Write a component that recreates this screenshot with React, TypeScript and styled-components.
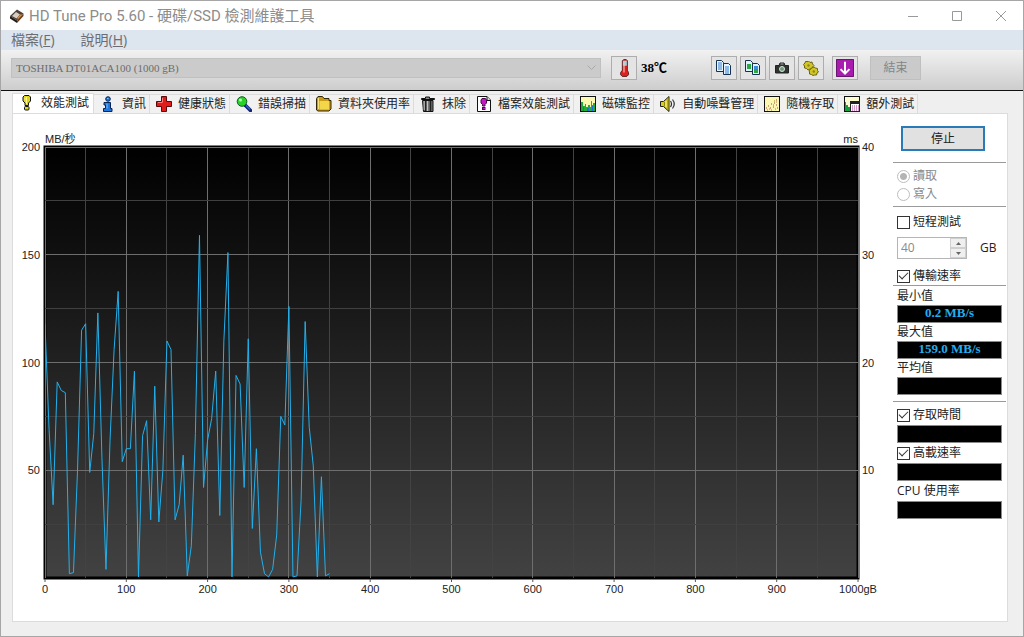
import React from "react";
import styled, { createGlobalStyle, css } from "styled-components";

const UI = `"Liberation Sans", "Noto Sans CJK TC", sans-serif`;
const CAPTION = `"Open Sans", "Noto Sans CJK TC", sans-serif`;
const TITLE = `Roboto, "Noto Sans CJK TC", sans-serif`;
const SERIF = `"Liberation Serif", "Noto Sans CJK TC", serif`;

const GlobalStyle = createGlobalStyle`
  *, *::before, *::after { box-sizing: border-box; }
  body { margin: 0; font: 12px/18px ${UI}; color: #222; background: #efefef; }
  button, input, select { font: inherit; color: inherit; margin: 0; }
`;

const Window = styled.div`
  display: flex;
  flex-direction: column;
  min-height: 100vh;
  border: 1px solid #a6a6a6;
  background: #efefef;
`;

const TitleBar = styled.header`
  display: flex;
  align-items: center;
  height: 29px;
  padding-left: 8px;
  background: #fff;
  color: #8c8c8c;
`;

const Title = styled.h1`
  flex: 1;
  margin: 0;
  padding-left: 4px;
  font: 400 15px/20px ${TITLE};
  white-space: nowrap;
`;

const CaptionButton = styled.button`
  display: grid;
  place-items: center;
  width: 44px;
  height: 29px;
  padding: 0;
  border: 0;
  background: none;
`;

const MenuBar = styled.nav`
  display: flex;
  gap: 26px;
  height: 20px;
  padding-left: 10px;
  background: #dde5ee;
`;

const MenuButton = styled.button`
  padding: 0;
  border: 0;
  background: none;
  color: #6a6e74;
  font: 14px/20px ${CAPTION};
`;

const Toolbar = styled.div`
  display: flex;
  align-items: center;
  height: 41px;
  padding: 0 102px 4px 10px;
  border-bottom: 1px solid #111;
  background: linear-gradient(#f1f1f1, #cdcdcd);
`;

const DriveBox = styled.div`
  display: grid;
  flex: 1;
  align-items: center;
  margin-right: 10px;
  & > * { grid-area: 1 / 1; }
  & > svg { justify-self: end; margin-right: 5px; pointer-events: none; }
`;

const DriveSelect = styled.select`
  appearance: none;
  width: 100%;
  height: 20px;
  padding: 0 4px;
  border: 1px solid #c0c0c0;
  border-radius: 0;
  background: #cbcbcb;
  color: #6d6d6d;
  font: 11px/18px ${SERIF};
  opacity: 1;
`;

const ToolButton = styled.button<{ $before?: number }>`
  display: grid;
  place-items: center;
  width: 26px;
  height: 24px;
  margin-left: ${(p) => p.$before ?? 0}px;
  padding: 0;
  border: 1px solid #adadad;
  background: #e4e4e4;
`;

const ToolGroup = styled.div`
  display: flex;
  gap: 3px;
`;

const Temperature = styled.span`
  width: 70px;
  padding-left: 4px;
  color: #000;
  font: 700 13px/18px ${SERIF};
`;

const ExitButton = styled.button`
  width: 51px;
  height: 24px;
  margin-left: 12px;
  padding: 0;
  border: 1px solid #bfbfbf;
  background: #cacaca;
  color: #858585;
`;

const TabList = styled.div`
  display: flex;
  padding: 2px 0 0 11px;
`;

const Tab = styled.button<{ $active?: boolean }>`
  display: flex;
  align-items: center;
  gap: 6px;
  height: 19px;
  margin-top: 1px;
  padding: 0 3px 0 6px;
  border: 1px solid #dcdcdc;
  border-left: 0;
  border-bottom: 0;
  background: #f1f1f1;
  color: #222;
  line-height: 18px;
  white-space: nowrap;
  ${(p) =>
    p.$active &&
    css`
      height: 21px;
      margin: 0 0 -1px;
      padding: 0 4px 2px 6px;
      border-left: 1px solid #dcdcdc;
      background: #fff;
    `}
`;

const Panel = styled.main`
  display: flex;
  flex: 1;
  margin: 0 15px 14px 11px;
  border: 1px solid #dcdcdc;
  background: #fff;
`;

const ChartArea = styled.section`
  flex: 1;
  display: flex;
  min-height: 400px;
  padding: 33px 35px 43px 32px;
`;

const ChartSvg = styled.svg`
  flex: 1;
  width: 0;
  height: auto;
  overflow: visible;
  text { font: 11px ${UI}; fill: #222; }
`;

const SidePanel = styled.aside`
  display: flex;
  flex-direction: column;
  width: 113px;
  margin-right: 1px;
`;

const StopButton = styled.button`
  width: 84px;
  height: 25px;
  margin: 12px 0 11px 8px;
  padding: 0;
  border: 2px solid #2a7ab8;
  background: #e1e1e1;
`;

const Group = styled.div<{ $top?: number; $bottom?: number }>`
  display: flex;
  flex-direction: column;
  padding: ${(p) => p.$top ?? 0}px 4px ${(p) => p.$bottom ?? 0}px;
  border-top: 1px solid #9a9a9a;
`;

const Option = styled.label<{ $off?: boolean; $height?: number }>`
  display: flex;
  align-items: center;
  gap: 3px;
  height: ${(p) => p.$height ?? 18}px;
  color: ${(p) => (p.$off ? "#8a8a8a" : "#222")};
`;

const Radio = styled.input`
  appearance: none;
  width: 13px;
  height: 13px;
  border: 1px solid #bdbdbd;
  border-radius: 50%;
  background: #fff;
  &:checked { background: radial-gradient(#b4b4b4 0 3px, #fff 4px); }
`;

const CheckBox = styled.input`
  appearance: none;
  display: grid;
  place-items: center;
  width: 13px;
  height: 13px;
  border: 1px solid #333;
  background: #fff;
  &:checked::after {
    content: "";
    width: 9px;
    height: 5px;
    margin-bottom: 3px;
    border: solid #333;
    border-width: 0 0 1px 1px;
    transform: rotate(-45deg);
  }
`;

const SizeRow = styled.div`
  display: flex;
  align-items: center;
  margin: 6px 0 8px;
`;

const Spinner = styled.div`
  display: flex;
  width: 70px;
  height: 22px;
  border: 1px solid #b5b5b5;
`;

const SpinInput = styled.input`
  flex: 1;
  width: 0;
  padding: 0 3px;
  border: 0;
  background: #fff;
  color: #8a8a8a;
  font: 12px/18px ${CAPTION};
`;

const SpinButtons = styled.div`
  display: flex;
  flex-direction: column;
  width: 16px;
`;

const SpinButton = styled.button`
  display: grid;
  place-items: center;
  flex: 1;
  padding: 0;
  border: 1px solid #d0d0d0;
  background: #efefef;
`;

const Unit = styled.label`
  margin-left: 13px;
  font-family: ${CAPTION};
`;

const Caption = styled.div<{ $height?: number }>`
  height: ${(p) => p.$height ?? 18}px;
  line-height: ${(p) => p.$height ?? 18}px;
  font-family: ${CAPTION};
`;

const Readout = styled.output`
  height: 18px;
  border: 1px solid #8a8a8a;
  background: #000;
  color: #22aef0;
  font: 700 13px/13px ${SERIF};
  text-align: center;
`;

/* ---------- icons ---------- */

type Draw = { children: React.ReactNode; size?: number };
const Icon = ({ children, size = 16 }: Draw) => (
  <svg width={size} height={size} viewBox="0 0 16 16" aria-hidden="true">
    {children}
  </svg>
);

const AppIcon = () => (
  <Icon>
    <path d="M1 8 8 1.5 14.5 5.500 8 12.500Z" fill="#4b423d" />
    <path d="M1 8 8 12.500V15L1 10.500Z" fill="#1f1a18" />
    <path d="M8 12.500 14.500 5.500V8L8 15Z" fill="#6d3a1c" />
    <path d="M3 8 7 4 11 6.500 7.500 10.500Z" fill="#d9cdbd" />
    <path d="m8 10 4-4 1 1-4 4Z" fill="#e58a2c" />
  </Icon>
);

const BulbIcon = () => (
  <Icon>
    <path d="M5.500.5h4.500l1.500 1.500v4L9.500 8v2.500H6V8L4 6V2Z" fill="#ddd51c" stroke="#111" />
    <path d="M6 2.500v3M7.500 2v7" stroke="#fff889" />
    <rect x="5.500" y="11.500" width="4.500" height="3.500" rx="1" fill="#ddd51c" stroke="#111" />
  </Icon>
);

const InfoIcon = () => (
  <Icon>
    <circle cx="8" cy="3" r="2.300" fill="#1d78e0" stroke="#0a2350" />
    <path d="M4 6.500h6.500v6h1.500v3H3.500v-3h2v-3.500H4Z" fill="#1d78e0" stroke="#0a2350" />
    <path d="M7 2.500h1.500M7 7.500v5" stroke="#7dbcff" />
  </Icon>
);

const HealthIcon = () => (
  <Icon>
    <path d="M5.500.5h5v5h5v5h-5v5h-5v-5h-5v-5h5Z" fill="#e01c1c" stroke="#5c0808" />
    <path d="M6.500 6.500V2M2 6.500h4" stroke="#ff7d7d" />
  </Icon>
);

const ScanIcon = () => (
  <Icon>
    <path d="m9 9 5.500 5.500" stroke="#12256b" strokeWidth="3.500" strokeLinecap="round" />
    <path d="m10 9.500 4 4" stroke="#3a62d8" strokeWidth="1.300" />
    <circle cx="6" cy="5.500" r="4.800" fill="#2bd12b" stroke="#0c5f1d" />
    <circle cx="4.500" cy="4" r="1.500" fill="#b9ffb0" />
  </Icon>
);

const FolderIcon = () => (
  <Icon>
    <path d="M.5 14v-11.500l1.500-2h4.500l1.500 2h5v2h2v8.500l-2 2h-11Z" fill="#c99a18" stroke="#30260a" />
    <path d="M3.500 5h9.500v8.500H3.500Z" fill="#f3d64a" />
    <path d="M2.500 2v11" stroke="#f7e27a" />
  </Icon>
);

const TrashIcon = () => (
  <Icon>
    <path d="M1.500 3.500v-1h4v-1.500h4v1.500h5v1Z" fill="#8b8b8b" stroke="#111" />
    <path d="M2.500 4.500h10.500v11H3.500Z" fill="#777" stroke="#111" />
    <path d="M5.500 5v10M10.500 5v10" stroke="#222" strokeWidth="1.500" />
    <path d="M4.200 5v9M7.500 5v10" stroke="#c4c4c4" />
  </Icon>
);

const FileTestIcon = () => (
  <Icon>
    <path d="M1.500.5h9.500l3.500 3.500v11.500h-13Z" fill="#fff" stroke="#111" />
    <path d="M11 .5v4h3.500" fill="#ddd" stroke="#111" />
    <path d="M6 2.500h3.500l1 1.500v3L9 8.500v1.500H6.500V8.500L5 7V4Z" fill="#c417c4" stroke="#50064f" />
    <rect x="6.500" y="11.500" width="2.500" height="2" fill="#c417c4" stroke="#50064f" />
  </Icon>
);

const MonitorIcon = () => (
  <Icon>
    <rect x=".5" y=".5" width="15" height="15" fill="#fcfab0" stroke="#111" />
    <path d="M1 15V6h2v4h2V8h1v3h2V9h2v2h1V5h1v4h1V7h2v8Z" fill="#1fae3a" />
    <path d="M3 15v-4h1v4M7 15v-3h2v3M12 15v-5h1v5" fill="#1f6fd6" />
  </Icon>
);

const SpeakerIcon = () => (
  <Icon>
    <path d="M.5 5.500h3L9 .500v15L3.500 10.500h-3Z" fill="#d8cf22" stroke="#222" />
    <path d="M4.500 6v4.500M8 2.500v11" stroke="#8e8711" />
    <path d="M6 5v6" stroke="#fff889" />
    <path d="M10.500 5q2 3 0 6M12.500 3.500q3.500 4.500 0 9" fill="none" stroke="#333" strokeWidth="1.200" />
  </Icon>
);

const RandomIcon = () => (
  <Icon>
    <rect x=".5" y=".5" width="15" height="15" fill="#fdf7b4" stroke="#111" />
    <path
      d="M2 12h1M4 10h1M6 12h1M7 8h1M9 11h1M10 7h1M12 9h1M12 4h1M13 12h1"
      stroke="#a14a3c"
    />
    <path d="M3 14h1M5 13h1M9 9h1M11 13h1M12 6h1M7 14h1M10 5h1" stroke="#9a8a2a" />
  </Icon>
);

const ExtraIcon = () => (
  <Icon>
    <rect x=".5" y=".5" width="15" height="15" fill="#fdfbd0" stroke="#111" />
    <path d="M1 15V6h1v3h2v2h2v4Z" fill="#14a03a" />
    <rect x="6.500" y="5.500" width="9" height="10" fill="#fff" stroke="#222" />
    <path d="M7 7h8" stroke="#222" strokeWidth="2" />
    <path d="M8 10h1M10 10h1M12 10h1M14 10h1M8 12h1M10 12h1M12 12h1M14 12h1M8 14h1M10 14h1M12 14h1M14 14h1" stroke="#a8328c" />
  </Icon>
);

const ThermometerIcon = () => (
  <Icon size={18}>
    <path d="M6.500 1.500 8 .5h2l1 1v8.500l1 2v2l-1.500 1.500h-4L5 14v-2l1.500-2Z" fill="#e21f1f" stroke="#3b1212" strokeWidth=".7" />
    <path d="M7 1.500h3.500V6H7Z" fill="#8fdbe2" />
    <path d="M8 3v9" stroke="#ffc0b8" />
  </Icon>
);

const Page = ({ x, y, fill }: { x: number; y: number; fill: string }) => (
  <path d={`M${x} ${y}h5l2 2v9h-7Z`} fill={fill} stroke="#17304f" />
);

const CopyTextIcon = () => (
  <Icon>
    <Page x={0.5} y={0.5} fill="#e8f4ff" />
    <path d="M2 3h4M2 5h4M2 7h4M2 9h4" stroke="#2f82cc" />
    <Page x={7.5} y={3.5} fill="#e8f4ff" />
    <path d="M9 7h4M9 9h4M9 11h4M9 13h4" stroke="#2f82cc" />
  </Icon>
);

const CopyImageIcon = () => (
  <Icon>
    <Page x={0.5} y={0.5} fill="#dff2ff" />
    <path d="M2 4h4v5H2Z" fill="#28a745" />
    <Page x={7.5} y={3.5} fill="#dff2ff" />
    <path d="M9 6h4v3H9Z" fill="#3b8ede" />
    <path d="M9 9h4v4H9Z" fill="#28a745" />
  </Icon>
);

const CameraIcon = () => (
  <Icon>
    <path d="M1.500 5.500h3.500l1-2.500h4l1 2.500h3.500v7.500h-13Z" fill="#303431" stroke="#222" />
    <circle cx="8" cy="9" r="2.500" fill="#6f9a7c" stroke="#dde5de" />
    <path d="M6.500 4h3" stroke="#aaa" />
  </Icon>
);

const OptionsIcon = () => (
  <Icon>
    <path d="M5.500 1 7 2.500l2-.5.500 2L11 5.500 9.500 7 9 9H7L5 10 3.500 8.500l-2-.5V6L.5 4.500 2 3l.5-1.500H5Z" fill="#d0c524" stroke="#6b6414" />
    <path d="m11 7 1.500 1 2 .500v2l1 1.500-1.500 1-.500 2h-2L10 15.500 8.500 14.500l-2-.5V12L6 10.500 7.500 9.500 8.500 8Z" fill="#d0c524" stroke="#6b6414" />
    <circle cx="5.500" cy="5.500" r="1.200" fill="#8f871d" />
    <circle cx="10.800" cy="11.500" r="1.200" fill="#8f871d" />
  </Icon>
);

const SaveIcon = () => (
  <Icon size={18}>
    <rect x=".5" y=".5" width="15" height="15" fill="#a81cb0" stroke="#5d0a63" strokeWidth=".8" />
    <path d="M8 2.500v10.500M4 9l4 4 4-4" fill="none" stroke="#fff" strokeWidth="1.800" />
  </Icon>
);

/* ---------- chart ---------- */

const CAPACITY = 1000;
const MAX_RATE = 200;
const SAMPLE_STEP = 5;

// Transfer rate in MB/s, one reading every 5 gB.
const readings = [
  118, 69, 34, 91, 87, 86, 2, 2.5, 50, 115, 118, 49, 67, 123, 56, 4, 64, 106, 133, 54,
  60, 60, 96, 0.5, 66, 73, 27, 89, 26, 50, 110, 106, 27, 34, 57, 1, 15, 67, 159, 42,
  64, 74, 96, 29, 110, 151, 0.5, 94, 90, 42, 111, 23, 60, 12, 2, 0.5, 4, 20, 75, 71,
  126, 0.5, 1, 36, 119, 70, 52, 0.5, 47, 1, 2,
];

const steps = (count: number) => Array.from({ length: count + 1 }, (_, i) => i);

const Chart = () => (
  <ChartSvg role="img" aria-label="MB/秒">
    <defs>
      <linearGradient id="plot" x1="0" y1="0" x2="0" y2="1">
        <stop offset="0" stopColor="#000" />
        <stop offset="1" stopColor="#424242" />
      </linearGradient>
    </defs>
    <rect width="100%" height="100%" fill="url(#plot)" stroke="#000" strokeWidth="3" />
    <g shapeRendering="crispEdges">
      {steps(20).map((i) => (
        <line
          key={`v${i}`}
          x1={`${i * 5}%`}
          x2={`${i * 5}%`}
          y2="100%"
          stroke={i % 2 ? "#434343" : "#6e6e6e"}
        />
      ))}
      {steps(8).map((i) => (
        <line
          key={`h${i}`}
          y1={`${i * 12.5}%`}
          y2={`${i * 12.5}%`}
          x2="100%"
          stroke={i === 8 ? "#000" : i % 2 ? "#404040" : "#6e6e6e"}
        />
      ))}
    </g>
    <svg width="100%" height="100%" viewBox={`0 0 ${CAPACITY} ${MAX_RATE}`} preserveAspectRatio="none">
      <polyline
        points={readings.map((v, i) => `${i * SAMPLE_STEP},${MAX_RATE - v}`).join(" ")}
        fill="none"
        stroke="#22b0ec"
        vectorEffect="non-scaling-stroke"
      />
    </svg>
    <text x="0" y="-4">MB/秒</text>
    <text x="100%" y="-4" textAnchor="end">ms</text>
    {[200, 150, 100, 50].map((v, i) => (
      <text key={v} x="-5" y={`${i * 25}%`} dy="4" textAnchor="end">{v}</text>
    ))}
    {[40, 30, 20, 10].map((v, i) => (
      <svg key={v} x="100%" overflow="visible">
        <text x="4" y={`${i * 25}%`} dy="4">{v}</text>
      </svg>
    ))}
    <svg y="100%" overflow="visible">
      {steps(10).map((i) => (
        <React.Fragment key={i}>
          <line x1={`${i * 10}%`} x2={`${i * 10}%`} y1="1" y2="4" stroke="#555" />
          <text x={`${i * 10}%`} y="15" textAnchor="middle">
            {i === 10 ? "1000gB" : i * 100}
          </text>
        </React.Fragment>
      ))}
    </svg>
  </ChartSvg>
);

/* ---------- page ---------- */

const tabs: [string, React.FC][] = [
  ["效能測試", BulbIcon],
  ["資訊", InfoIcon],
  ["健康狀態", HealthIcon],
  ["錯誤掃描", ScanIcon],
  ["資料夾使用率", FolderIcon],
  ["抹除", TrashIcon],
  ["檔案效能測試", FileTestIcon],
  ["磁碟監控", MonitorIcon],
  ["自動噪聲管理", SpeakerIcon],
  ["隨機存取", RandomIcon],
  ["額外測試", ExtraIcon],
];

const Check = ({ label, checked, height }: { label: string; checked?: boolean; height?: number }) => (
  <Option $height={height}>
    <CheckBox type="checkbox" defaultChecked={checked} />
    {label}
  </Option>
);

export default function App() {
  return (
    <>
      <GlobalStyle />
      <Window>
        <TitleBar>
          <AppIcon />
          <Title>HD Tune Pro 5.60 - 硬碟/SSD 檢測維護工具</Title>
          <CaptionButton aria-label="Minimize">
            <svg width="10" height="10"><path d="M0 5.500h10" stroke="#999" /></svg>
          </CaptionButton>
          <CaptionButton aria-label="Maximize">
            <svg width="10" height="10"><path d="M.5.5h9v9h-9Z" fill="none" stroke="#999" /></svg>
          </CaptionButton>
          <CaptionButton aria-label="Close">
            <svg width="10" height="10"><path d="m0 0 10 10M10 0 0 10" stroke="#999" /></svg>
          </CaptionButton>
        </TitleBar>

        <MenuBar>
          <MenuButton>檔案(<u>F</u>)</MenuButton>
          <MenuButton>說明(<u>H</u>)</MenuButton>
        </MenuBar>

        <Toolbar>
          <DriveBox>
            <DriveSelect disabled aria-label="Drive">
              <option>TOSHIBA DT01ACA100 (1000 gB)</option>
            </DriveSelect>
            <svg width="9" height="6"><path d="m.5.5 4 4 4-4" fill="none" stroke="#a8a8a8" /></svg>
          </DriveBox>
          <ToolButton aria-label="Temperature"><ThermometerIcon /></ToolButton>
          <Temperature>38℃</Temperature>
          <ToolGroup>
            <ToolButton $before={4} aria-label="Copy text"><CopyTextIcon /></ToolButton>
            <ToolButton aria-label="Copy image"><CopyImageIcon /></ToolButton>
            <ToolButton aria-label="Screenshot"><CameraIcon /></ToolButton>
            <ToolButton aria-label="Options"><OptionsIcon /></ToolButton>
            <ToolButton $before={5} aria-label="Save"><SaveIcon /></ToolButton>
          </ToolGroup>
          <ExitButton disabled>結束</ExitButton>
        </Toolbar>

        <TabList role="tablist">
          {tabs.map(([label, TabIcon], i) => (
            <Tab key={label} role="tab" aria-selected={i === 0} $active={i === 0}>
              <TabIcon />
              {label}
            </Tab>
          ))}
        </TabList>

        <Panel>
          <ChartArea>
            <Chart />
          </ChartArea>
          <SidePanel>
            <StopButton>停止</StopButton>
            <Group $top={4} $bottom={3}>
              <Option $off>
                <Radio type="radio" name="mode" defaultChecked disabled />
                讀取
              </Option>
              <Option $off>
                <Radio type="radio" name="mode" disabled />
                寫入
              </Option>
            </Group>
            <Group $top={6}>
              <Check label="短程測試" />
              <SizeRow>
                <Spinner>
                  <SpinInput id="size" type="text" defaultValue="40" disabled />
                  <SpinButtons>
                    <SpinButton disabled aria-label="Increase">
                      <svg width="5" height="3"><path d="M0 3 2.500 0 5 3Z" fill="#666" /></svg>
                    </SpinButton>
                    <SpinButton disabled aria-label="Decrease">
                      <svg width="5" height="3"><path d="M0 0h5L2.500 3Z" fill="#666" /></svg>
                    </SpinButton>
                  </SpinButtons>
                </Spinner>
                <Unit htmlFor="size">GB</Unit>
              </SizeRow>
              <Check label="傳輸速率" checked />
            </Group>
            <Group $top={1} $bottom={6}>
              <Caption>最小值</Caption>
              <Readout>0.2 MB/s</Readout>
              <Caption>最大值</Caption>
              <Readout>159.0 MB/s</Readout>
              <Caption>平均值</Caption>
              <Readout />
            </Group>
            <Group $top={3}>
              <Check label="存取時間" checked height={20} />
              <Readout />
              <Check label="高載速率" checked height={20} />
              <Readout />
              <Caption $height={20}>CPU 使用率</Caption>
              <Readout />
            </Group>
          </SidePanel>
        </Panel>
      </Window>
    </>
  );
}
